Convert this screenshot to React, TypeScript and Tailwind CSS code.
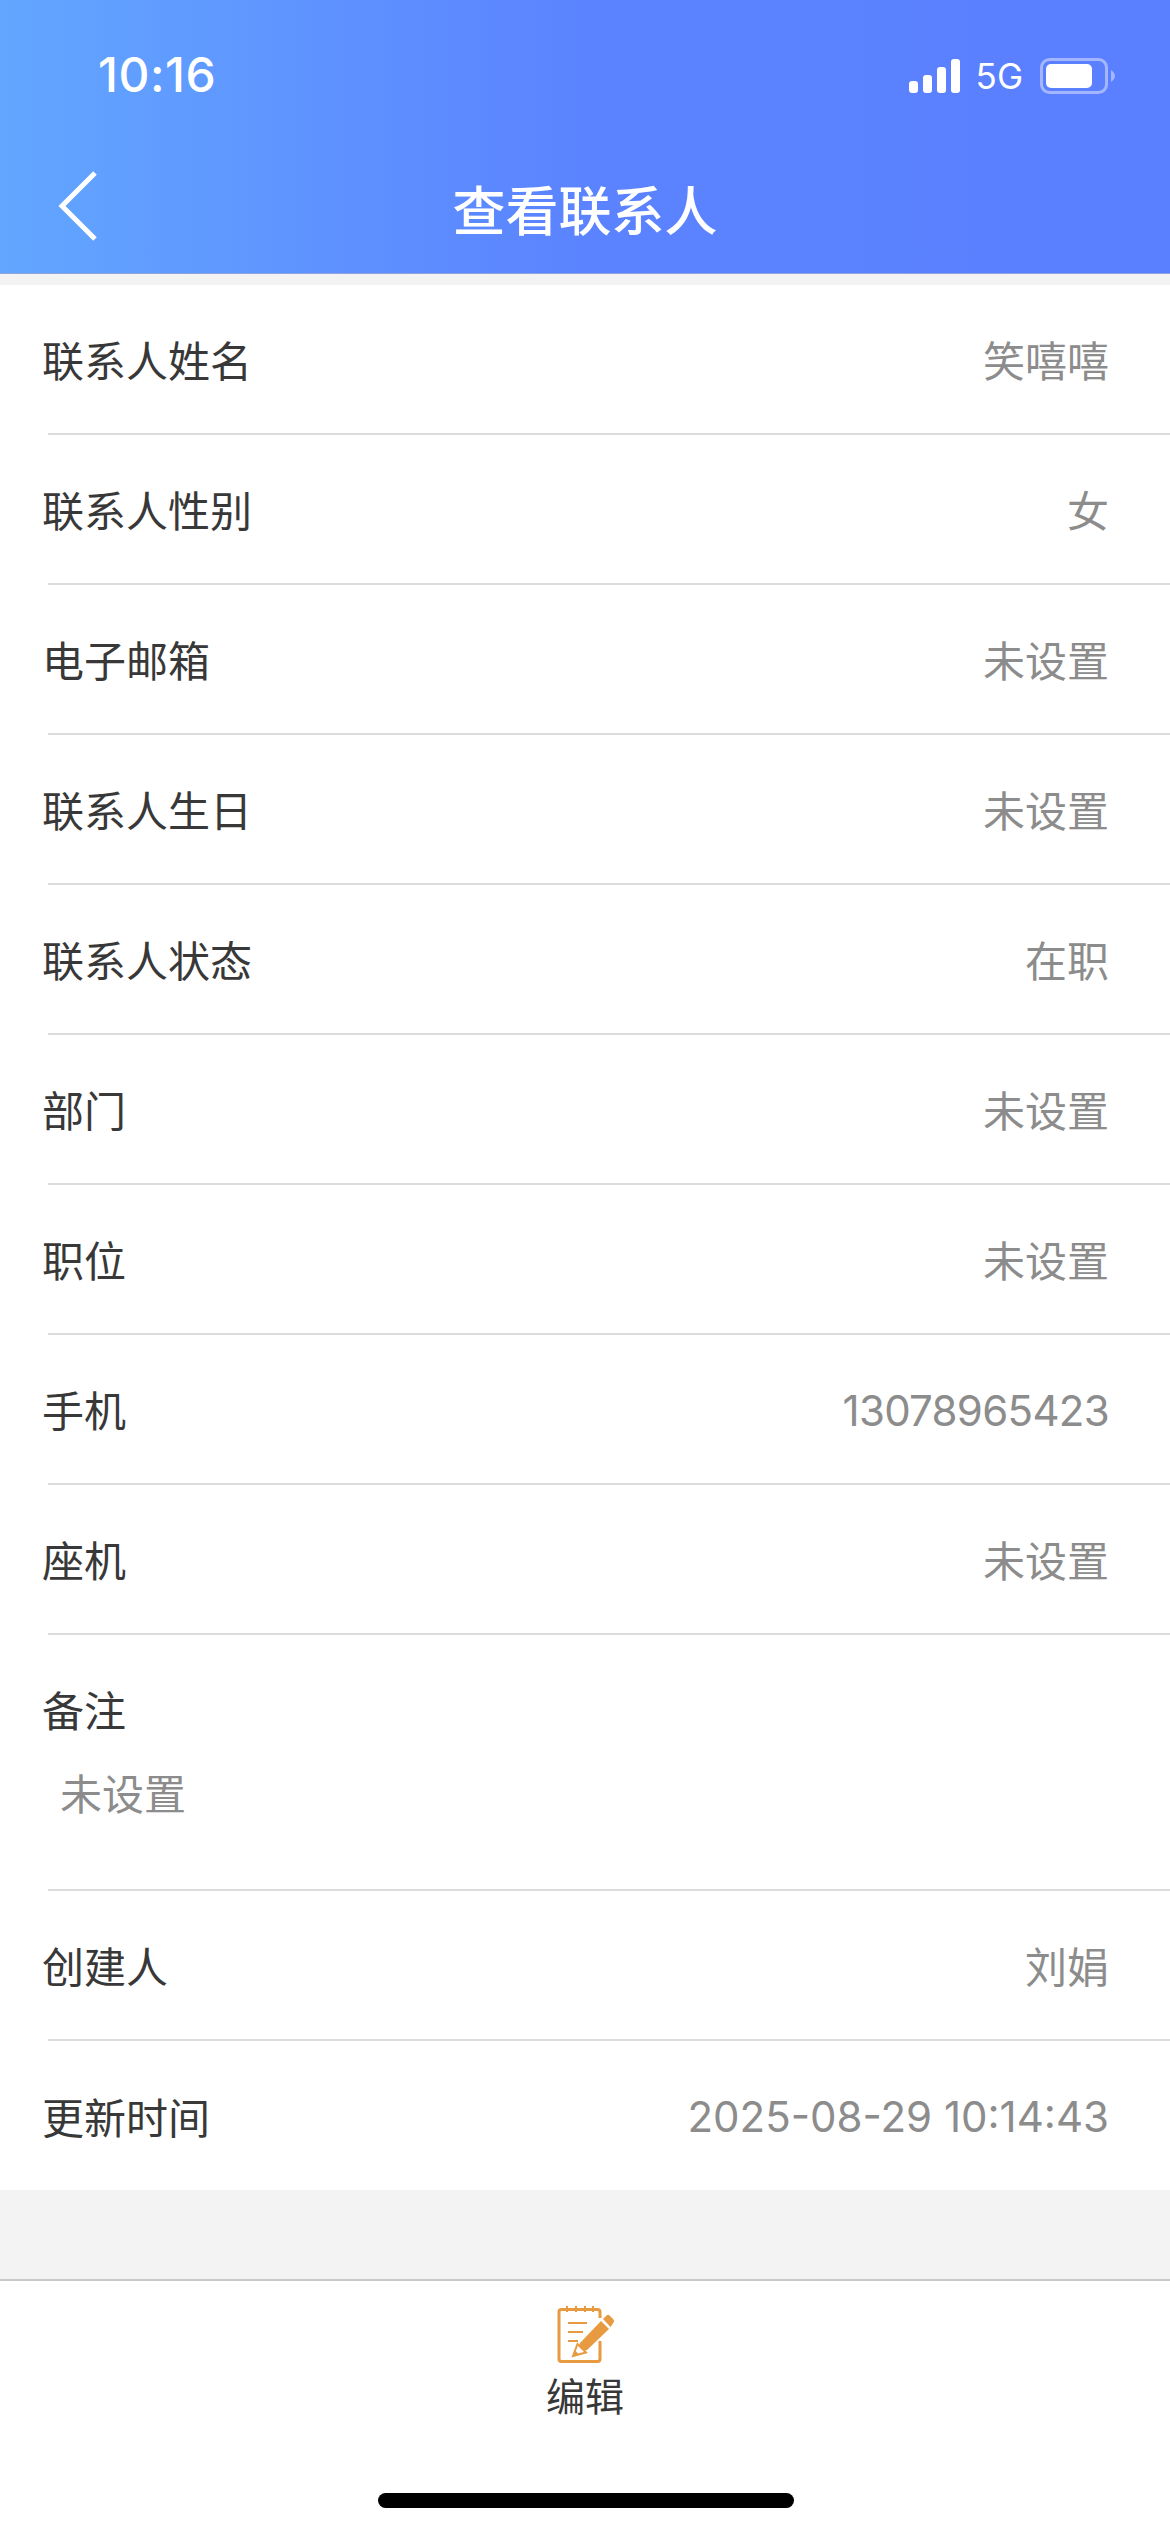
const font = "font-['Noto_Sans_CJK_SC','Liberation_Sans',sans-serif]";

const rows: [string, string][] = [
  ["联系人姓名", "笑嘻嘻"],
  ["联系人性别", "女"],
  ["电子邮箱", "未设置"],
  ["联系人生日", "未设置"],
  ["联系人状态", "在职"],
  ["部门", "未设置"],
  ["职位", "未设置"],
  ["手机", "13078965423"],
  ["座机", "未设置"],
];

function Row({ label, value, last, digits }: { label: string; value: string; last?: boolean; digits?: string }) {
  return (
    <div className="pl-[48px]">
      <div
        className={`flex items-center justify-between pr-[61px] ${last ? "h-[149px]" : "h-[150px] border-b-2 border-[#dcdcdc]"}`}
      >
        <span className="-ml-[6px] text-[42px] leading-[60px] text-[#383838]">{label}</span>
        <span className={`text-[42px] leading-[60px] text-[#8c8c8c] ${digits ?? ""}`}>{value}</span>
      </div>
    </div>
  );
}

function EditIcon() {
  return (
    <svg className="ml-[2px]" width="58" height="58" viewBox="0 0 58 58" fill="none">
      <path d="M43 12V6A2.5 2.5 0 0 0 40.5 3.500H4.500A2.500 2.500 0 0 0 2 6V53A2.500 2.500 0 0 0 4.500 55.500H40.500A2.500 2.500 0 0 0 43 53V35" stroke="#e79a3f" strokeWidth="3" />
      <path d="M10 0V6M19 0V6M28 0V6M36 0V6" stroke="#e79a3f" strokeWidth="2" />
      <path d="M11 17H30M11 26H26M11 35H21" stroke="#e79a3f" strokeWidth="2" />
      <path d="M19 47L23 37L44 15L52 23L30 44Z" fill="#e79a3f" />
      <path d="M46 13L49.500 9.500Q51 8 52.500 9.500L56.500 13.500Q58 15 56.500 16.500L53.500 21Z" fill="#e79a3f" />
      <path d="M16 50L20.500 38L29 46.500Z" fill="#ffffff" stroke="#e79a3f" strokeWidth="2" />
      <path d="M16 50L18 44.500L21.500 48Z" fill="#e79a3f" />
    </svg>
  );
}

export default function App() {
  return (
    <div className={`flex h-[2532px] w-[1170px] flex-col overflow-hidden bg-[#f3f3f3] ${font}`}>
      <header className="h-[274px] border-b border-[#8ea3e0] bg-[linear-gradient(90deg,#62a6ff_0%,#5b83ff_50%,#5a7fff_100%)] text-white">
        <div className="flex h-[150px] items-start justify-between pl-[98px] pr-[54px] pt-[48px]">
          <span className="font-['Inter',sans-serif] text-[48px] font-medium leading-[54px] tracking-[0.5px]">10:16</span>
          <div className="flex items-center pt-[8px]">
            <svg width="52" height="34" viewBox="0 0 52 34" fill="white">
              <rect x="0" y="22" width="9" height="12" rx="3" />
              <rect x="14" y="16" width="9" height="18" rx="3" />
              <rect x="28" y="8" width="9" height="26" rx="3" />
              <rect x="42" y="0" width="9" height="34" rx="3" />
            </svg>
            <span className="ml-[15px] font-['Inter',sans-serif] text-[35px] leading-[40px]">5G</span>
            <svg className="ml-[17px]" width="76" height="36" viewBox="0 0 76 36" fill="none">
              <rect x="1.500" y="1.500" width="65" height="33" rx="8" stroke="#a3b6ff" strokeWidth="3" />
              <rect x="6" y="6" width="46" height="24" rx="5" fill="white" />
              <path d="M71 12Q75 15 75 18Q75 21 71 24Z" fill="#a3b6ff" />
            </svg>
          </div>
        </div>
        <div className="relative flex h-[123px] items-center justify-center">
          <svg className="absolute left-[58px] top-[21px]" width="40" height="70" viewBox="0 0 40 70" fill="none">
            <path d="M37 2L4 35L37 68" stroke="white" strokeWidth="5" />
          </svg>
          <h1 className="-mt-[7px] text-[53px] font-medium leading-[60px]">查看联系人</h1>
        </div>
      </header>

      <main className="mt-[11px] bg-white">
        {rows.map(([l, v]) => (
          <Row
            key={l}
            label={l}
            value={v}
            digits={l === "手机" ? "pt-[4px] font-['Inter',sans-serif] tracking-[-0.7px]" : undefined}
          />
        ))}
        <div className="pl-[48px]">
          <div className="h-[256px] border-b-2 border-[#dcdcdc] pt-[44px]">
            <div className="-ml-[6px] text-[42px] leading-[60px] text-[#383838]">备注</div>
            <div className="ml-[12px] mt-[23px] text-[42px] leading-[60px] text-[#8c8c8c]">未设置</div>
          </div>
        </div>
        <Row label="创建人" value="刘娟" />
        <Row label="更新时间" value="2025-08-29 10:14:43" last digits="pt-[2px] font-['Inter',sans-serif]" />
      </main>

      <div className="flex-1" />

      <footer className="relative h-[253px] border-t-2 border-[#c8c8c8] bg-white">
        <div className="flex flex-col items-center pt-[25px]">
          <EditIcon />
          <span className="mt-[2px] text-[39px] leading-[56px] text-[#383838]">编辑</span>
        </div>
        <div className="absolute bottom-[24px] left-[378px] h-[15px] w-[416px] rounded-full bg-black" />
      </footer>
    </div>
  );
}
